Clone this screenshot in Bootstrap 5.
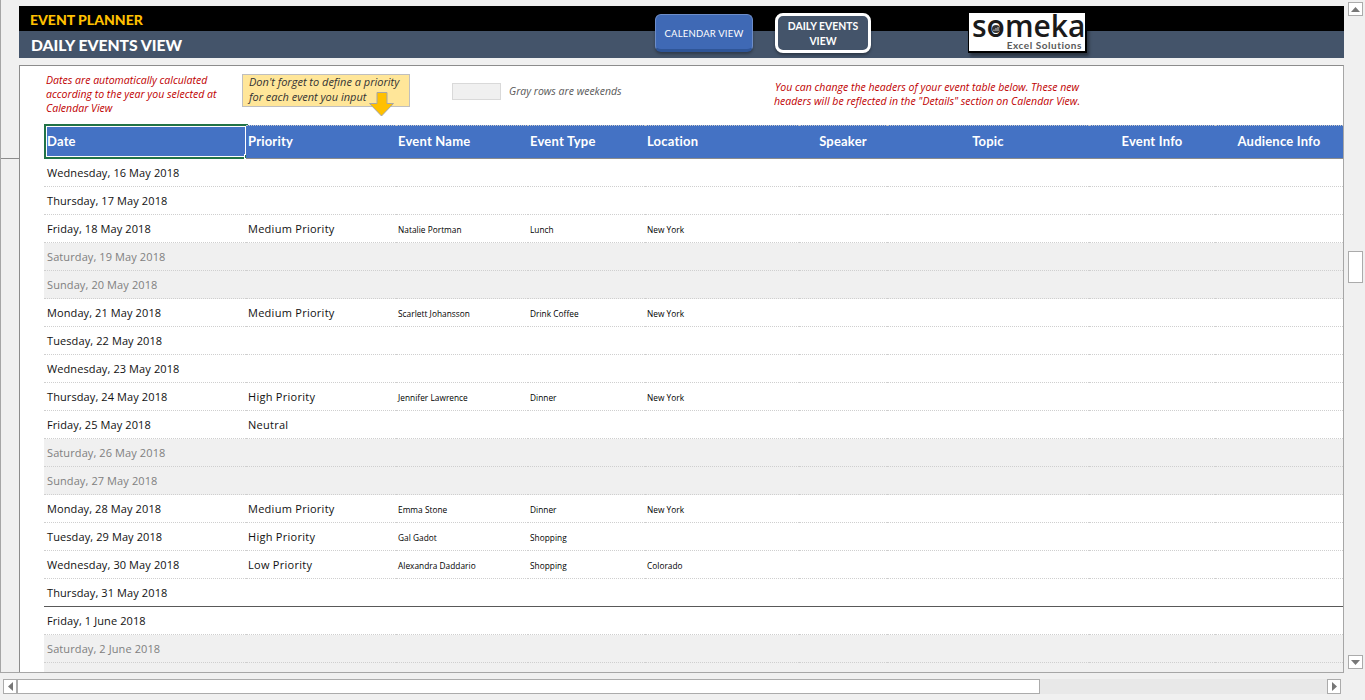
<!DOCTYPE html>
<html lang="en"><head><meta charset="utf-8"><title>Event Planner</title>
<link href="https://cdn.jsdelivr.net/npm/bootstrap@5.3.0/dist/css/bootstrap.min.css" rel="stylesheet">
<style>
html,body{height:700px;overflow:hidden}
body{background:#f0f0f0;font-family:"Open Sans","Noto Sans",sans-serif;color:#111}
.sheet{width:1365px;height:700px}
.viewport{width:1344px;height:673px;border-left:1px solid #a6a6a6;border-bottom:1px solid #a6a6a6}
.gutter{width:18px;flex:none}
.gutter-line{height:159px;border-bottom:1px solid #8c8c8c}
.workarea{width:1325px;padding-top:6px}
.head-wrap{height:52px;margin-bottom:7px}
.bar-black{height:25px;background:#000;color:#ffc000;font:900 14px/27px Lato,sans-serif;padding-left:11px}
.bar-slate{height:27px;background:#44546a;color:#fff;font:900 15.7px/28px Lato,sans-serif;padding-left:12px}
.head-tools{position:absolute;inset:0;pointer-events:none}
.view-btn{position:absolute;display:flex;align-items:center;justify-content:center;text-align:center;color:#fff;font-family:Lato,sans-serif}
.view-cal{left:636px;top:8px;width:98px;height:38px;background:#3f69b5;border:1px solid #6d8dc9;border-bottom:3px solid #2f5597;border-radius:6px;font-size:9.5px;padding-top:5px;box-shadow:0 2px 3px rgba(0,0,0,.3);letter-spacing:.2px}
.view-day{left:756px;top:7px;width:96px;height:40px;background:#44546a;border:3px solid #fff;border-radius:8px;font-size:10.4px;line-height:15px;font-weight:700;padding-top:2px;box-shadow:0 2px 3px rgba(0,0,0,.35)}
.brand{position:absolute;left:949px;top:6px;width:119px;height:41px;background:#fff;border:1px solid #000;border-right-width:2px;border-bottom-width:2px;box-shadow:2px 3px 3px rgba(0,0,0,.4);padding:0 3px;text-align:right}
.brand-name{display:block;text-align:center;font:600 30px/25px "Open Sans",sans-serif;color:#1a1a1a;height:27px;white-space:nowrap}
.brand-sub{display:block;font:700 10px/10px Lato,sans-serif;color:#595959;letter-spacing:.55px}
.brand-mark{position:absolute;left:23px;top:12px}
.frame{height:607px;background:#fff;border-top:1px solid #8c8c8c;border-left:1px solid #8c8c8c;border-right:1px solid #a6a6a6;padding-left:24px;overflow:hidden}
.notes{height:59px;position:relative}
.red-note{color:#c00000;font-style:italic;font-size:10.55px;line-height:14px}
.note-a{position:absolute;left:2px;top:7px;white-space:nowrap}
.tip-box{position:absolute;left:198px;top:8px;width:168px;height:33px;background:#ffe699;border:1px solid #bfbfbf;font-style:italic;font-size:11px;line-height:15px;padding:0 6px;color:#333;white-space:nowrap}
.tip-text{display:block;margin-top:-1px}
.tip-arrow{position:absolute;left:325px;top:26px}
.swatch{position:absolute;left:408px;top:17px;width:49px;height:17px;background:#f0f0f0;border:1px solid #d9d9d9}
.swatch-label{position:absolute;left:465px;top:18px;font-style:italic;font-size:10.5px;line-height:14px;color:#595959;white-space:nowrap}
.note-b{position:absolute;left:699px;top:14px;width:368px;text-align:center;white-space:nowrap}
.plan{table-layout:fixed;width:1299px;margin:0;border-collapse:separate;border-spacing:0;--bs-table-bg:transparent}
.plan th,.plan td{padding:0;border:0;white-space:nowrap;vertical-align:middle}
.plan thead th{height:34px;background:#4472c4;color:#fff;font:700 13px/1 Lato,sans-serif;padding-bottom:2px;border-top:1px dotted #c8c8c8;border-bottom:1px solid #8c8c8c;position:relative;letter-spacing:.2px}
.plan tbody td{height:28px;border-bottom:1px dotted #cfcfcf;font-size:11px;letter-spacing:.1px;color:#111;background:#fff;padding-top:2px}
.plan tbody td.c2{letter-spacing:.27px}
.plan tbody tr.weekend td{background:#f0f0f0;color:#808080}
.plan tbody tr.month-end td{border-bottom:1px solid #595959}
.plan .c1{padding-left:3px}.plan .c2{padding-left:2px}.plan .c3,.plan .c4,.plan .c5{padding-left:2px}
.plan tbody td.c3,.plan tbody td.c4,.plan tbody td.c5{font-size:8.3px;letter-spacing:.03px;padding-top:4px;color:#000}
.plan .ctr{text-align:center}
.cell-focus{position:absolute;left:0;top:-2px;right:-2px;bottom:-1px;border:2px solid #217346;box-shadow:inset 0 0 0 1px #fff}
.cell-focus::after{content:"";position:absolute;right:-3px;bottom:-2px;width:5px;height:5px;background:#217346;border:1px solid #fff}
.vbar{width:15px;height:667px;margin:2px 0 0 4px}
.sb-btn{width:15px;height:14px;border:1px solid #ababab;background:#fff;display:flex;align-items:center;justify-content:center;flex:none}
.sb-thumb-v{width:15px;height:32px;border:1px solid #ababab;background:#fff;margin-top:235px}
.hbar{width:1338px;height:15px;margin:6px 0 0 3px;background:#e8e8e8}
.sb-btn-h{width:14px;height:15px;border:1px solid #ababab;background:#fff;display:flex;align-items:center;justify-content:center;flex:none}
.sb-thumb-h{width:1023px;height:15px;border:1px solid #ababab;background:#fff}
</style></head>
<body class="m-0">
<div class="sheet">
 <div class="d-flex">
  <div class="viewport d-flex">
   <div class="gutter"><div class="gutter-line"></div></div>
   <div class="workarea">
    <div class="head-wrap position-relative">
     <div class="bar-black">EVENT PLANNER</div>
     <div class="bar-slate">DAILY EVENTS VIEW</div>
     <div class="head-tools">
      <div class="view-btn view-cal">CALENDAR VIEW</div>
      <div class="view-btn view-day">DAILY EVENTS<br>VIEW</div>
      <div class="brand"><span class="brand-name">someka</span><span class="brand-sub">Excel Solutions</span>
       <svg class="brand-mark" width="8" height="8" viewBox="0 0 8 8"><circle cx="4" cy="4" r="4" fill="#333"/><path d="M2 6V4.5M4 6V3M6 6V2" stroke="#ccc" stroke-width="1"/></svg>
      </div>
     </div>
    </div>
    <div class="frame">
     <div class="notes">
      <div class="red-note note-a">Dates are automatically calculated<br>according to the year you selected at<br>Calendar View</div>
      <div class="tip-box"><span class="tip-text">Don't forget to define a priority<br>for each event you input</span></div>
      <svg class="tip-arrow" width="25" height="25" viewBox="0 0 25 25"><path d="M8 .5h10v11h6.5L12.5 24 .5 11.5H8z" fill="#ffc000" stroke="#a6a6a6"/></svg>
      <div class="swatch"></div>
      <div class="swatch-label">Gray rows are weekends</div>
      <div class="red-note note-b">You can change the headers of your event table below. These new<br>headers will be reflected in the "Details" section on Calendar View.</div>
     </div>
     <table class="table plan">
      <colgroup><col style="width:202px"><col style="width:150px"><col style="width:132px"><col style="width:117px"><col style="width:154px"><col style="width:88px"><col style="width:202px"><col style="width:126px"><col style="width:128px"></colgroup>
      <thead><tr><th class="c1"><span class="cell-focus"></span>Date</th><th class="c2">Priority</th><th class="c3">Event Name</th><th class="c4">Event Type</th><th class="c5">Location</th><th class="ctr">Speaker</th><th class="ctr">Topic</th><th class="ctr">Event Info</th><th class="ctr">Audience Info</th></tr></thead>
      <tbody>
       <tr><td class="c1">Wednesday, 16 May 2018</td><td class="c2"></td><td class="c3"></td><td class="c4"></td><td class="c5"></td><td></td><td></td><td></td><td></td></tr>
       <tr><td class="c1">Thursday, 17 May 2018</td><td class="c2"></td><td class="c3"></td><td class="c4"></td><td class="c5"></td><td></td><td></td><td></td><td></td></tr>
       <tr><td class="c1">Friday, 18 May 2018</td><td class="c2">Medium Priority</td><td class="c3">Natalie Portman</td><td class="c4">Lunch</td><td class="c5">New York</td><td></td><td></td><td></td><td></td></tr>
       <tr class="weekend"><td class="c1">Saturday, 19 May 2018</td><td class="c2"></td><td class="c3"></td><td class="c4"></td><td class="c5"></td><td></td><td></td><td></td><td></td></tr>
       <tr class="weekend"><td class="c1">Sunday, 20 May 2018</td><td class="c2"></td><td class="c3"></td><td class="c4"></td><td class="c5"></td><td></td><td></td><td></td><td></td></tr>
       <tr><td class="c1">Monday, 21 May 2018</td><td class="c2">Medium Priority</td><td class="c3">Scarlett Johansson</td><td class="c4">Drink Coffee</td><td class="c5">New York</td><td></td><td></td><td></td><td></td></tr>
       <tr><td class="c1">Tuesday, 22 May 2018</td><td class="c2"></td><td class="c3"></td><td class="c4"></td><td class="c5"></td><td></td><td></td><td></td><td></td></tr>
       <tr><td class="c1">Wednesday, 23 May 2018</td><td class="c2"></td><td class="c3"></td><td class="c4"></td><td class="c5"></td><td></td><td></td><td></td><td></td></tr>
       <tr><td class="c1">Thursday, 24 May 2018</td><td class="c2">High Priority</td><td class="c3">Jennifer Lawrence</td><td class="c4">Dinner</td><td class="c5">New York</td><td></td><td></td><td></td><td></td></tr>
       <tr><td class="c1">Friday, 25 May 2018</td><td class="c2">Neutral</td><td class="c3"></td><td class="c4"></td><td class="c5"></td><td></td><td></td><td></td><td></td></tr>
       <tr class="weekend"><td class="c1">Saturday, 26 May 2018</td><td class="c2"></td><td class="c3"></td><td class="c4"></td><td class="c5"></td><td></td><td></td><td></td><td></td></tr>
       <tr class="weekend"><td class="c1">Sunday, 27 May 2018</td><td class="c2"></td><td class="c3"></td><td class="c4"></td><td class="c5"></td><td></td><td></td><td></td><td></td></tr>
       <tr><td class="c1">Monday, 28 May 2018</td><td class="c2">Medium Priority</td><td class="c3">Emma Stone</td><td class="c4">Dinner</td><td class="c5">New York</td><td></td><td></td><td></td><td></td></tr>
       <tr><td class="c1">Tuesday, 29 May 2018</td><td class="c2">High Priority</td><td class="c3">Gal Gadot</td><td class="c4">Shopping</td><td class="c5"></td><td></td><td></td><td></td><td></td></tr>
       <tr><td class="c1">Wednesday, 30 May 2018</td><td class="c2">Low Priority</td><td class="c3">Alexandra Daddario</td><td class="c4">Shopping</td><td class="c5">Colorado</td><td></td><td></td><td></td><td></td></tr>
       <tr class="month-end"><td class="c1">Thursday, 31 May 2018</td><td class="c2"></td><td class="c3"></td><td class="c4"></td><td class="c5"></td><td></td><td></td><td></td><td></td></tr>
       <tr><td class="c1">Friday, 1 June 2018</td><td class="c2"></td><td class="c3"></td><td class="c4"></td><td class="c5"></td><td></td><td></td><td></td><td></td></tr>
       <tr class="weekend"><td class="c1">Saturday, 2 June 2018</td><td class="c2"></td><td class="c3"></td><td class="c4"></td><td class="c5"></td><td></td><td></td><td></td><td></td></tr>
       <tr class="weekend"><td class="c1"></td><td class="c2"></td><td class="c3"></td><td class="c4"></td><td class="c5"></td><td></td><td></td><td></td><td></td></tr>
      </tbody>
     </table>
    </div>
   </div>
  </div>
  <div class="vbar d-flex flex-column">
   <div class="sb-btn"><svg width="9" height="5"><path d="M4.5 0L9 5H0z" fill="#777"/></svg></div>
   <div class="sb-thumb-v"></div>
   <div class="flex-grow-1"></div>
   <div class="sb-btn"><svg width="9" height="5"><path d="M0 0h9L4.5 5z" fill="#777"/></svg></div>
  </div>
 </div>
 <div class="hbar d-flex">
  <div class="sb-btn-h"><svg width="5" height="9"><path d="M5 0v9L0 4.5z" fill="#777"/></svg></div>
  <div class="sb-thumb-h"></div>
  <div class="flex-grow-1"></div>
  <div class="sb-btn-h"><svg width="5" height="9"><path d="M0 0l5 4.5L0 9z" fill="#777"/></svg></div>
 </div>
</div>
<script src="https://cdn.jsdelivr.net/npm/bootstrap@5.3.0/dist/js/bootstrap.bundle.min.js"></script>
</body></html>
